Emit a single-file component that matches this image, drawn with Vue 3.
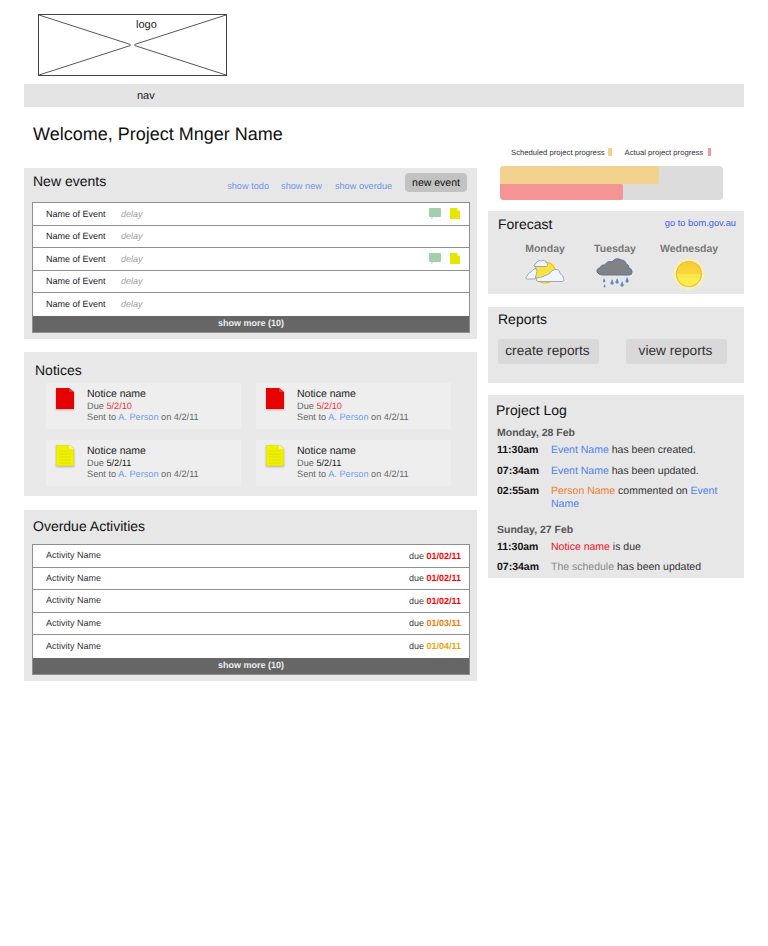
<script setup>
const events = [
  { id: 1, icons: true },
  { id: 2, icons: false },
  { id: 3, icons: true },
  { id: 4, icons: false },
  { id: 5, icons: false },
]

const notices = [
  { id: 1, type: 'red', due: '5/2/10' },
  { id: 2, type: 'red', due: '5/2/10' },
  { id: 3, type: 'yellow', due: '5/2/11' },
  { id: 4, type: 'yellow', due: '5/2/11' },
]

const activities = [
  { id: 1, due: '01/02/11', cls: 'red' },
  { id: 2, due: '01/02/11', cls: 'red' },
  { id: 3, due: '01/02/11', cls: 'red' },
  { id: 4, due: '01/03/11', cls: 'orange' },
  { id: 5, due: '01/04/11', cls: 'amber' },
]

const rays = [0, 30, 60, 90, 120, 150, 180, 210, 240, 270, 300, 330]
</script>

<template>
  <div class="page">
    <div class="logo">
      <svg class="logo-x" viewBox="0 0 188 61" preserveAspectRatio="none">
        <path d="M0 0L92 30M96 31L188 61M188 0L96 30M92 31L0 61" stroke="#555" stroke-width="1" fill="none" />
      </svg>
      <span class="logo-text">logo</span>
    </div>
    <div class="nav">nav</div>
    <h1 class="welcome">Welcome, Project Mnger Name</h1>

    <div class="columns">
      <div class="left">
        <section class="panel events">
          <div class="events-head">
            <h2>New events</h2>
            <div class="filters">
              <a>show todo</a>
              <a>show new</a>
              <a>show overdue</a>
            </div>
            <button class="new-event">new event</button>
          </div>
          <div class="list">
            <div v-for="e in events" :key="e.id" class="row">
              <span class="row-name">Name of Event</span>
              <span class="delay">delay</span>
              <span v-if="e.icons" class="row-icons">
                <svg width="12" height="12" viewBox="0 0 12 12">
                  <path d="M1 0H11A1 1 0 0 1 12 1V8A1 1 0 0 1 11 9H4L2.500 11.500V9H1A1 1 0 0 1 0 8V1A1 1 0 0 1 1 0Z" fill="#a3cfae" />
                </svg>
                <svg width="10" height="11" viewBox="0 0 10 11">
                  <path d="M0 0H7L10 3V11H0Z" fill="#e6e600" />
                  <path d="M7 0L10 3H7Z" fill="#f3f37a" />
                </svg>
              </span>
            </div>
            <div class="more">show more (10)</div>
          </div>
        </section>

        <section class="panel notices">
          <h2>Notices</h2>
          <div class="notice-grid">
            <div v-for="n in notices" :key="n.id" class="notice">
              <svg class="doc" width="18" height="21" viewBox="0 0 18 21">
                <path d="M0 0H13L18 4V21H0Z" :fill="n.type === 'red' ? '#e60000' : '#f0f000'" :stroke="n.type === 'red' ? 'none' : '#d4d422'" stroke-width="0.700" />
                <path v-if="n.type === 'yellow'" d="M3 6H15M3 9H15M3 12H15M3 15H15M3 18H15" stroke="#e0e010" stroke-width="1" />
                <path d="M13 0L18 4H13Z" :fill="n.type === 'red' ? '#ee3030' : '#f8f8a0'" />
              </svg>
              <div class="notice-text">
                <div class="notice-name">Notice name</div>
                <div class="notice-meta">Due <span :class="n.type === 'red' ? 'red' : 'ink'">{{ n.due }}</span></div>
                <div class="notice-meta">Sent to <a>A. Person</a> on 4/2/11</div>
              </div>
            </div>
          </div>
        </section>

        <section class="panel overdue">
          <h2>Overdue Activities</h2>
          <div class="list">
            <div v-for="a in activities" :key="a.id" class="row">
              <span class="row-name">Activity Name</span>
              <span class="due">due <b :class="a.cls">{{ a.due }}</b></span>
            </div>
            <div class="more">show more (10)</div>
          </div>
        </section>
      </div>

      <div class="right">
        <div class="legend">
          <span>Scheduled project progress</span><i class="swatch tan"></i>
          <span class="legend-second">Actual project progress</span><i class="swatch pink"></i>
        </div>
        <div class="progress">
          <div class="bar-scheduled"></div>
          <div class="bar-actual"></div>
        </div>

        <section class="panel forecast">
          <div class="forecast-head">
            <h2>Forecast</h2>
            <a>go to bom.gov.au</a>
          </div>
          <div class="days">
            <div class="day">
              <div class="day-name">Monday</div>
              <svg width="40" height="30" viewBox="0 0 40 30">
                <g stroke="#f7eeb4" stroke-width="1.500">
                  <line v-for="r in rays" :key="r" x1="20" y1="1" x2="20" y2="4" :transform="`rotate(${r} 20 15.500)`" />
                </g>
                <circle cx="20" cy="15.500" r="10.500" fill="#fbe23f" stroke="#f4b43c" stroke-width="1.200" />
                <path d="M9.500 9.500a2 2 0 0 1 1.500-3a4 4 0 0 1 5.500-2.500a3 3 0 0 1 5 2a2 2 0 0 1 0 3.500Z" fill="#f2f5fa" stroke="#7d9cc4" stroke-width="0.800" />
                <path d="M1.500 22a2 2 0 0 1 .5-3a6 6 0 0 1 4-4a7 7 0 0 1 5-3.500l1 3-2 7.500Z" fill="#f2f5fa" stroke="#7d9cc4" stroke-width="0.800" />
                <path d="M12.500 24.500a2 2 0 0 1 0-3.500c3-1 5-1 6.500-2c2-1 4-1 6-3c1-2 4-4 7-3.500c2 .5 3 2 3 4c2 1 3.500 3 3.500 5a2 2 0 0 1-1 3Z" fill="#f2f5fa" stroke="#7d9cc4" stroke-width="0.800" />
              </svg>
            </div>
            <div class="day">
              <div class="day-name">Tuesday</div>
              <svg width="40" height="32" viewBox="0 0 40 32">
                <path d="M2 15a3 3 0 0 1 3-4a4 4 0 0 1 5-3a5 5 0 0 1 7-3a6 6 0 0 1 9-2a5 5 0 0 1 5 4a4 4 0 0 1 3 4a4 4 0 0 1 3 4a3 3 0 0 1-3 3H7a6 6 0 0 1-5-3Z" fill="#808285" stroke="#5c7896" />
                <path d="M9 21l-1.200 3a1.200 1.200 0 0 0 2.400 0ZM9.500 27l-1 2.500a1 1 0 0 0 2 0ZM17 22l-1.700 4a1.700 1.700 0 0 0 3.400 0ZM22 21l-1.700 4a1.700 1.700 0 0 0 3.400 0ZM27 24l-1.700 4a1.700 1.700 0 0 0 3.400 0ZM32 20l-1.700 4a1.700 1.700 0 0 0 3.400 0Z" fill="#5f8dc2" />
              </svg>
            </div>
            <div class="day">
              <div class="day-name">Wednesday</div>
              <svg width="36" height="34" viewBox="0 0 36 34">
                <defs>
                  <linearGradient id="sunFace" x1="0" y1="0" x2="0" y2="1">
                    <stop offset="0" stop-color="#f8cb35" />
                    <stop offset="0.5" stop-color="#f9d83c" />
                    <stop offset="0.52" stop-color="#fbe848" />
                    <stop offset="1" stop-color="#fbef55" />
                  </linearGradient>
                </defs>
                <circle cx="18" cy="17" r="15" fill="#f8f3c4" />
                <g stroke="#f9efa8" stroke-width="2">
                  <line v-for="r in rays" :key="r" x1="18" y1="0" x2="18" y2="4" :transform="`rotate(${r} 18 17)`" />
                </g>
                <circle cx="18" cy="17" r="12.500" fill="url(#sunFace)" stroke="#f3b73a" stroke-width="1.200" />
              </svg>
            </div>
          </div>
        </section>

        <section class="panel reports">
          <h2>Reports</h2>
          <div class="report-buttons">
            <button class="create">create reports</button>
            <button class="view">view reports</button>
          </div>
        </section>

        <section class="panel log">
          <h2>Project Log</h2>
          <div class="log-date">Monday, 28 Feb</div>
          <div class="log-row">
            <b>11:30am</b>
            <p><a>Event Name</a> has been created.</p>
          </div>
          <div class="log-row">
            <b>07:34am</b>
            <p><a>Event Name</a> has been updated.</p>
          </div>
          <div class="log-row tight">
            <b>02:55am</b>
            <p><span class="person">Person Name</span> commented on <a>Event Name</a></p>
          </div>
          <div class="log-date second">Sunday, 27 Feb</div>
          <div class="log-row">
            <b>11:30am</b>
            <p><span class="log-red">Notice name</span> is due</p>
          </div>
          <div class="log-row tight">
            <b>07:34am</b>
            <p><span class="muted">The schedule</span> has been updated</p>
          </div>
        </section>
      </div>
    </div>
  </div>
</template>

<style>
body {
  background: #fff;
}
</style>

<style scoped>
.page {
  width: 768px;
  height: 946px;
  padding: 14px 24px 0;
  box-sizing: border-box;
  font-family: "Liberation Sans", Arial, sans-serif;
  text-rendering: geometricPrecision;
  color: #111;
  overflow: hidden;
}

.logo {
  position: relative;
  width: 189px;
  height: 62px;
  margin-left: 14px;
  box-sizing: border-box;
  border: 1px solid #444;
  background: #fff;
}

.logo-x {
  position: absolute;
  inset: 0;
  width: 100%;
  height: 100%;
}

.logo-text {
  position: absolute;
  top: 4px;
  left: 97px;
  font-size: 11px;
  color: #222;
}

.nav {
  height: 23px;
  line-height: 25px;
  margin-top: 8px;
  padding-left: 113px;
  background: #e4e4e4;
  font-size: 11px;
  color: #222;
}

.welcome {
  margin: 15px 0 0 9px;
  height: 24px;
  line-height: 24px;
  font-size: 18px;
  font-weight: 400;
}

.columns {
  display: flex;
  gap: 11px;
  align-items: flex-start;
}

.left {
  width: 453px;
  margin-top: 22px;
}

.right {
  width: 256px;
  margin-top: 1px;
}

.panel {
  background: #e7e7e7;
}

h2 {
  margin: 0;
  font-size: 14px;
  font-weight: 400;
  color: #111;
  white-space: nowrap;
}

a {
  color: #4e80f0;
}

.events {
  height: 171px;
  padding: 0 7px 0 8px;
  box-sizing: border-box;
}

.events-head {
  display: flex;
  height: 34px;
  align-items: flex-start;
}

.events-head h2 {
  margin: 5px 0 0 1px;
  line-height: 16px;
}

.filters {
  margin: 12px 0 0 121px;
  display: flex;
  font-size: 9.200px;
  line-height: 13px;
  white-space: nowrap;
}

.filters a {
  color: #6f93ee;
  margin-right: 12px;
}

.filters a:nth-child(2) {
  margin-right: 13px;
}

.new-event {
  flex: none;
  margin: 5px 3px 0 auto;
  width: 62px;
  height: 19px;
  padding: 0;
  border: 0;
  border-radius: 4px;
  background: #c2c2c2;
  font: 10.500px "Liberation Sans", Arial, sans-serif;
  text-rendering: geometricPrecision;
  color: #111;
}

.list {
  width: 438px;
  box-sizing: border-box;
  border: 1px solid #8f8f8f;
  background: #fff;
}

.row {
  display: flex;
  align-items: center;
  height: 22.500px;
  padding: 0 7px 0 13px;
  box-sizing: border-box;
  border-bottom: 1px solid #8f8f8f;
  font-size: 9px;
  color: #222;
}

.row:nth-last-child(2) {
  border-bottom: 0;
}

.row-name {
  width: 75px;
}

.delay {
  font-style: italic;
  color: #a0a0a0;
}

.row-icons {
  margin-left: auto;
  display: flex;
  align-items: center;
  gap: 9px;
  margin-right: 2px;
}

.more {
  height: 16px;
  line-height: 15px;
  background: #666;
  color: #eee;
  text-align: center;
  font-size: 9px;
  font-weight: 700;
}

.notices {
  height: 144px;
  margin-top: 13px;
  padding: 10px 26px 0 11px;
  box-sizing: border-box;
  background: #e9e9e9;
}

.notices h2 {
  line-height: 16px;
}

.notice-grid {
  display: grid;
  grid-template-columns: 195px 195px;
  column-gap: 15px;
  row-gap: 11px;
  margin: 5px 0 0 11px;
}

.notice {
  display: flex;
  height: 46px;
  padding: 5px 0 0 10px;
  box-sizing: border-box;
  background: #eeeeee;
}

.doc {
  flex: none;
  filter: drop-shadow(0 1px 1px rgba(0, 0, 0, 0.25));
}

.notice-text {
  margin-left: 13px;
}

.notice-name {
  font-size: 10.500px;
  line-height: 13px;
  color: #222;
}

.notice-meta {
  font-size: 9.200px;
  line-height: 11px;
  color: #666;
}

.notice-meta a {
  color: #6f9cf5;
}

.ink {
  color: #222;
}

.red {
  color: #f00;
}

.orange {
  color: #f07c0a;
}

.amber {
  color: #e8a80c;
}

.notice-meta .red {
  color: #f23030;
}

.overdue {
  height: 171px;
  margin-top: 14px;
  padding: 0 8px;
  box-sizing: border-box;
}

.overdue h2 {
  line-height: 16px;
  padding: 8px 0 10px 1px;
}

.due {
  margin-left: auto;
  margin-right: 1px;
  font-size: 9px;
  color: #444;
}

.overdue .row-name {
  width: auto;
  margin-top: -1px;
  color: #333;
}

.legend {
  display: flex;
  align-items: center;
  height: 10px;
  padding-left: 23px;
  font-size: 7.700px;
  color: #333;
  white-space: nowrap;
}

.legend-second {
  margin-left: 13px;
}

.swatch {
  width: 4px;
  height: 8px;
  margin-left: 3px;
}

.tan {
  background: #f3d18f;
}

.pink {
  width: 3px;
  margin-left: 5px;
  background: #f59a9a;
}

.progress {
  width: 223px;
  height: 34px;
  margin: 9px 0 11px 12px;
  border-radius: 4px;
  background: #dcdcdc;
  overflow: hidden;
}

.bar-scheduled {
  width: 159px;
  height: 18px;
  background: #f3d18f;
  border-radius: 0 3px 3px 0;
}

.bar-actual {
  width: 123px;
  height: 16px;
  background: #f59494;
  border-radius: 0 2px 2px 0;
}

.forecast {
  height: 83px;
  padding: 5px 8px 0 10px;
  box-sizing: border-box;
}

.forecast-head {
  display: flex;
  justify-content: space-between;
}

.forecast-head h2 {
  line-height: 16px;
}

.forecast-head a {
  margin-top: 1px;
  font-size: 9.300px;
  line-height: 12px;
  color: #3f5ff5;
}

.days {
  position: relative;
  height: 50px;
  margin-top: 10px;
}

.day {
  position: absolute;
  top: 0;
  text-align: center;
  transform: translateX(-50%);
}

.day:nth-child(1) {
  left: 47px;
}

.day:nth-child(2) {
  left: 117px;
}

.day:nth-child(3) {
  left: 191px;
}

.day-name {
  font-size: 10.500px;
  line-height: 14px;
  font-weight: 700;
  color: #777;
  white-space: nowrap;
}

.day svg {
  display: block;
  margin: 1px auto 0;
}

.reports {
  height: 76px;
  margin-top: 13px;
  padding: 4px 0 0 10px;
  box-sizing: border-box;
}

.reports h2 {
  line-height: 16px;
}

.report-buttons {
  display: flex;
  gap: 27px;
  margin-top: 12px;
}

.report-buttons button {
  width: 101px;
  height: 25px;
  padding: 0 2px 2px 0;
  border: 0;
  border-radius: 3px;
  background: #d9d9d9;
  font: 13.700px "Liberation Sans", Arial, sans-serif;
  text-rendering: geometricPrecision;
  color: #333;
}

.log {
  height: 183px;
  margin-top: 12px;
  padding: 7px 0 0 8px;
  box-sizing: border-box;
}

.log h2 {
  line-height: 16px;
}

.log-date {
  margin: 9px 0 0 1px;
  font-size: 10.500px;
  line-height: 13px;
  font-weight: 700;
  color: #555;
}

.log-date.second {
  margin-top: 13px;
}

.log-row {
  display: flex;
  margin-top: 8px;
  padding-left: 1px;
  font-size: 10.500px;
  line-height: 13px;
}

.log-row.tight {
  margin-top: 7px;
}

.log-date + .log-row {
  margin-top: 4px;
}

.log-row b {
  flex: none;
  width: 54px;
  color: #111;
}

.log-row p {
  margin: 0;
  width: 180px;
  color: #333;
}

.log-row a {
  color: #4e80f0;
}

.person {
  color: #f07c2a;
}

.log-red {
  color: #f01020;
}

.muted {
  color: #8a8a8a;
}
</style>
